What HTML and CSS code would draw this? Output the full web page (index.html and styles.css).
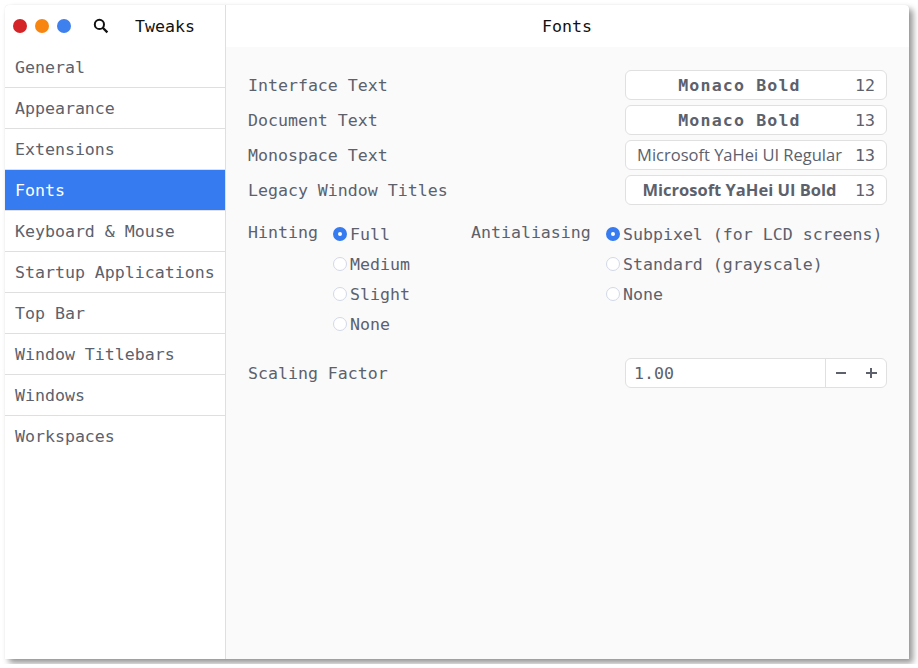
FILE: index.html
```html
<!DOCTYPE html>
<html lang="en">
<head>
<meta charset="utf-8">
<title>Tweaks</title>
<link rel="stylesheet" href="styles.css">
</head>
<body>
<div class="window">
  <aside class="sidebar">
    <header class="side-head">
      <span class="dot red"></span><span class="dot orange"></span><span class="dot blue"></span>
      <svg class="search" width="16" height="16" viewBox="0 0 16 16" fill="none" stroke="#111" stroke-width="2"><circle cx="6.4" cy="6.4" r="4.6"/><path d="M9.7 9.7L14.4 14.4" stroke-width="2.3"/></svg>
      <span class="app">Tweaks</span>
    </header>
    <nav>
      <div class="item">General</div>
      <div class="item">Appearance</div>
      <div class="item">Extensions</div>
      <div class="item active">Fonts</div>
      <div class="item">Keyboard &amp; Mouse</div>
      <div class="item">Startup Applications</div>
      <div class="item">Top Bar</div>
      <div class="item">Window Titlebars</div>
      <div class="item">Windows</div>
      <div class="item last">Workspaces</div>
    </nav>
  </aside>
  <main class="main">
    <header class="title">Fonts</header>
    <section class="content">
      <div class="row"><span class="label">Interface Text</span><div class="font-btn"><span class="name bold">Monaco Bold</span><span class="size">12</span></div></div>
      <div class="row"><span class="label">Document Text</span><div class="font-btn"><span class="name bold">Monaco Bold</span><span class="size">13</span></div></div>
      <div class="row"><span class="label">Monospace Text</span><div class="font-btn"><span class="name ui">Microsoft YaHei UI Regular</span><span class="size">13</span></div></div>
      <div class="row"><span class="label">Legacy Window Titles</span><div class="font-btn"><span class="name ui-bold">Microsoft YaHei UI Bold</span><span class="size">13</span></div></div>
      <div class="options">
        <span class="group-label">Hinting</span>
        <div class="group">
          <div class="radio"><i class="on"></i>Full</div>
          <div class="radio"><i></i>Medium</div>
          <div class="radio"><i></i>Slight</div>
          <div class="radio"><i></i>None</div>
        </div>
        <span class="group-label">Antialiasing</span>
        <div class="group">
          <div class="radio"><i class="on"></i>Subpixel (for LCD screens)</div>
          <div class="radio"><i></i>Standard (grayscale)</div>
          <div class="radio"><i></i>None</div>
        </div>
      </div>
      <div class="row scaling"><span class="label">Scaling Factor</span>
        <div class="spin"><span class="value">1.00</span><span class="buttons">
          <svg width="60" height="28" viewBox="0 0 60 28" fill="#5c616c"><path d="M10 13h10v2H10zM40 13h4V9h2v4h5v2h-5v4h-2v-4h-4z"/></svg>
        </span></div>
      </div>
    </section>
  </main>
</div>
</body>
</html>
```
FILE: styles.css
```css
* { box-sizing: border-box; }
body {
  margin: 0;
  padding: 5px;
  background: #fff;
  color: #5c616c;
  font: 16.6px/22px "DejaVu Sans Mono", monospace;
  letter-spacing: -0.01px;
  white-space: nowrap;
}
.window {
  display: flex;
  width: 904px;
  height: 654px;
  border-radius: 4px 4px 0 0;
  background: #fff;
  box-shadow: 4px 4px 6px rgba(0, 0, 0, 0.42), 0 0 1px rgba(0, 0, 0, 0.12);
}
.sidebar { width: 221px; border-right: 1px solid #dfdfdf; }
.side-head { display: flex; align-items: center; height: 42px; padding-left: 8px; color: #111; }
.dot { width: 14px; height: 14px; margin-right: 8px; border-radius: 50%; }
.red { background: #d42427; }
.orange { background: #f98511; }
.blue { background: #3e80ee; }
.search { margin: 0 26px 0 14px; }
.app, .label, .size, .bold { padding-top: 2px; }
.item { height: 41px; padding: 10px 10px 8px; border-bottom: 1px solid #dfdfdf; }
.item.active { background: #367bf0; color: #fff; }
.item.last { border-bottom: 0; }
.main { flex: 1; display: flex; flex-direction: column; }
.title { height: 42px; padding-right: 1px; line-height: 43px; text-align: center; color: #111; }
.content { flex: 1; padding: 23px 22px 0; background: #fafafa; }
.row { display: flex; justify-content: space-between; align-items: center; height: 30px; margin-bottom: 5px; }
.font-btn { display: flex; align-items: center; width: 262px; height: 30px; padding: 0 11px 0 10px; border: 1px solid #e0e0e0; border-radius: 6px; background: #fff; }
.name { flex: 1; text-align: center; }
.size { width: 20px; margin-left: 12px; }
.bold { font-weight: bold; letter-spacing: 1.15px; }
.ui, .ui-bold { font-family: "Open Sans", sans-serif; font-size: 16.5px; letter-spacing: 0; }
.ui-bold { font-weight: bold; }
.options { display: flex; height: 120px; margin-top: 14px; }
.group-label { flex: none; width: 85px; padding-top: 3px; }
.group { flex: none; width: 138px; }
.group + .group-label { width: 135px; }
.radio { display: flex; align-items: center; height: 30px; padding-top: 2px; }
.radio i { flex: none; width: 14px; height: 14px; margin: -2px 3px 0 0; border: 1px solid #d3d8e8; border-radius: 50%; background: #fff; }
.radio i.on { border: 5px solid #367bf0; }
.scaling { margin-top: 19px; }
.spin { display: flex; width: 262px; height: 30px; border: 1px solid #e0e0e0; border-radius: 6px; background: #fff; }
.value { flex: 1; padding: 4px 8px 2px; }
.buttons { display: flex; width: 61px; border-left: 1px solid #e0e0e0; }
```
